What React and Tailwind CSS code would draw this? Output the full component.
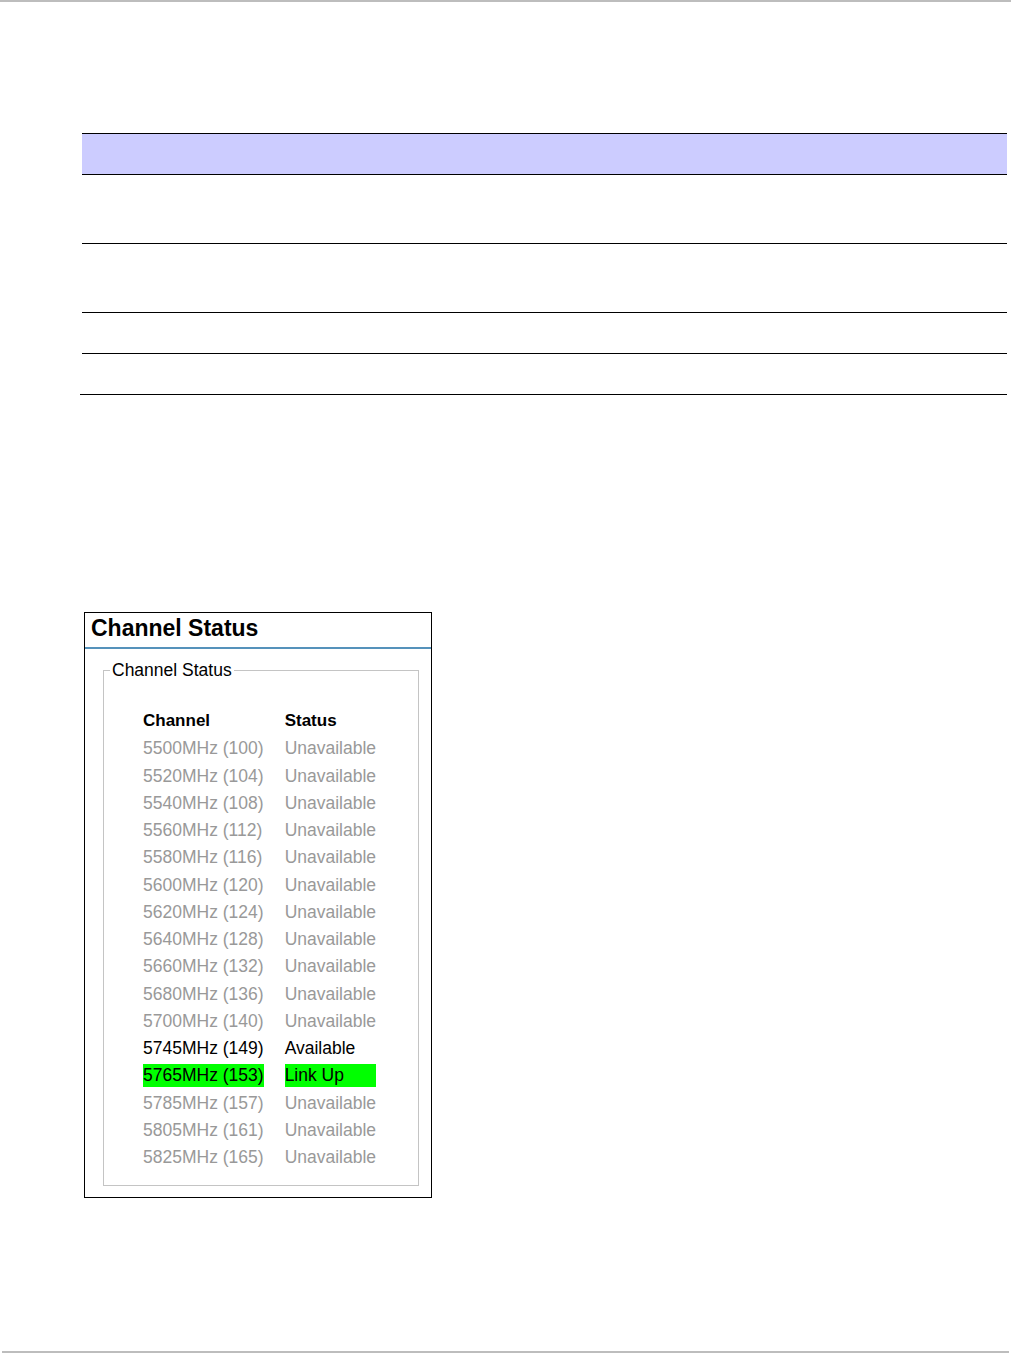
import React from 'react';

const channels = [
  { ch: '5500MHz (100)', status: 'Unavailable' },
  { ch: '5520MHz (104)', status: 'Unavailable' },
  { ch: '5540MHz (108)', status: 'Unavailable' },
  { ch: '5560MHz (112)', status: 'Unavailable' },
  { ch: '5580MHz (116)', status: 'Unavailable' },
  { ch: '5600MHz (120)', status: 'Unavailable' },
  { ch: '5620MHz (124)', status: 'Unavailable' },
  { ch: '5640MHz (128)', status: 'Unavailable' },
  { ch: '5660MHz (132)', status: 'Unavailable' },
  { ch: '5680MHz (136)', status: 'Unavailable' },
  { ch: '5700MHz (140)', status: 'Unavailable' },
  { ch: '5745MHz (149)', status: 'Available' },
  { ch: '5765MHz (153)', status: 'Link Up' },
  { ch: '5785MHz (157)', status: 'Unavailable' },
  { ch: '5805MHz (161)', status: 'Unavailable' },
  { ch: '5825MHz (165)', status: 'Unavailable' },
];

function cellClass(status) {
  if (status === 'Link Up') return 'bg-[#00ff00] text-black';
  if (status === 'Available') return 'text-black';
  return 'text-[#999999]';
}

const ChannelStatus = () => {
  return (
    <div className="ml-[84px] mt-[217px] w-[348px] border border-black pb-[11px]">
      <div className="h-[34px] pl-[6px] text-[23px] font-bold leading-[30px] text-black">
        Channel Status
      </div>
      <div className="h-[2px] bg-[#5592bb]"></div>
      <fieldset className="mt-[11px] ml-[18px] mr-[12px] border border-[#c4c4c4] pl-[6px] pt-[30px] pb-[16px]">
        <legend className="px-[2px] text-[17.5px] leading-[20px] text-black">Channel Status</legend>
        <div className="pl-[33px] grid grid-cols-[auto_auto] justify-start gap-x-[21px] gap-y-[4.67px] text-[17.5px] leading-[22.6px]">
          <div className="text-[17px] font-bold text-black">Channel</div>
          <div className="text-[17px] font-bold text-black">Status</div>
          {channels.map(row => (
            <React.Fragment key={row.ch}>
              <div className={cellClass(row.status)}>{row.ch}</div>
              <div className={cellClass(row.status)}>{row.status}</div>
            </React.Fragment>
          ))}
        </div>
      </fieldset>
    </div>
  );
};

const App = () => {
  return (
    <div className="flex h-[1353px] flex-col bg-white font-['Liberation_Sans',Arial,sans-serif]">
      <div className="h-[2px] bg-[#bdbdbd]"></div>

      {/* empty parameter table */}
      <div className="ml-[82px] mt-[131px] w-[925px]">
        <div className="h-[42px] border-y border-black bg-[#ccccff]"></div>
        <div className="h-[69px] border-b border-black"></div>
        <div className="h-[69px] border-b border-black"></div>
        <div className="h-[41px] border-b border-black"></div>
        <div className="h-[40px]"></div>
      </div>
      <div className="ml-[80px] h-[1px] w-[927px] bg-black"></div>

      <ChannelStatus />

      <div className="mt-auto mx-[2px] h-[2px] bg-[#bdbdbd]"></div>
    </div>
  );
};

export default App;
